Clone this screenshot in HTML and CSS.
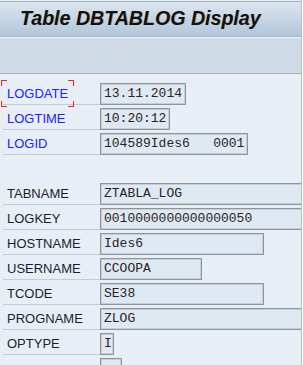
FILE: index.html
```html
<!DOCTYPE html>
<html lang="en">
<head>
    <meta charset="UTF-8">
    <title>Table DBTABLOG Display</title>
    <link rel="stylesheet" href="styles.css">
</head>
<body>

<div class="window">
    <div class="titlebar">
        <h1>Table DBTABLOG Display</h1>
    </div>
    <div class="toolbar"></div>

    <div class="content">
        <div class="group key">
            <div class="row">
                <span class="label focus">LOGDATE</span>
                <span class="field" style="width: calc(10ch + 8px)">13.11.2014</span>
            </div>
            <div class="row">
                <span class="label">LOGTIME</span>
                <span class="field" style="width: calc(8ch + 8px)">10:20:12</span>
            </div>
            <div class="row">
                <span class="label">LOGID</span>
                <span class="field" style="width: calc(18ch + 8px)">104589Ides6   0001</span>
            </div>
        </div>

        <div class="group">
            <div class="row">
                <span class="label">TABNAME</span>
                <span class="field" style="width: calc(30ch + 8px)">ZTABLA_LOG</span>
            </div>
            <div class="row">
                <span class="label">LOGKEY</span>
                <span class="field" style="width: calc(30ch + 8px)">0010000000000000050</span>
            </div>
            <div class="row">
                <span class="label">HOSTNAME</span>
                <span class="field" style="width: calc(20ch + 8px)">Ides6</span>
            </div>
            <div class="row">
                <span class="label">USERNAME</span>
                <span class="field" style="width: calc(12ch + 8px)">CCOOPA</span>
            </div>
            <div class="row">
                <span class="label">TCODE</span>
                <span class="field" style="width: calc(20ch + 8px)">SE38</span>
            </div>
            <div class="row">
                <span class="label">PROGNAME</span>
                <span class="field" style="width: calc(30ch + 8px)">ZLOG</span>
            </div>
            <div class="row">
                <span class="label">OPTYPE</span>
                <span class="field" style="width: calc(1ch + 6px)">I</span>
            </div>
            <div class="row">
                <span class="label"></span>
                <span class="field" style="width: calc(2ch + 6px)"></span>
            </div>
        </div>
    </div>
</div>

</body>
</html>
```

FILE: styles.css
```css
body {
    margin: 0;
    padding: 0;
    background: #ffffff;
    font-family: "Liberation Sans", Arial, sans-serif;
}
.window {
    width: 301px;
    height: 365px;
    overflow: hidden;
    background: #e8eef5;
    border-right: 1px solid #b4c0cc;
}
.titlebar {
    margin-top: 1px;
    height: 34px;
    border-top: 1px solid #a9b3bd;
    border-bottom: 1px solid #9fb3c8;
    background: linear-gradient(#dbe5ef, #b2c6db);
}
.titlebar h1 {
    margin: 0;
    padding-left: 20px;
    font-size: 19.6px;
    font-style: italic;
    font-weight: bold;
    line-height: 33px;
    color: #111111;
    text-shadow: 1px 0 0 rgba(190, 120, 40, 0.35);
    white-space: nowrap;
}
.toolbar {
    height: 35px;
    border-top: 1px solid #f2f6fa;
    border-bottom: 1px solid #a7b1bb;
    background: #cfdbe7;
}
.content {
    padding-top: 8px;
}
.group {
    margin-bottom: 25px;
}
.row {
    display: flex;
    height: 25px;
}
.label {
    position: relative;
    flex-shrink: 0;
    box-sizing: border-box;
    width: 97px;
    height: 23px;
    margin-left: 3px;
    padding-left: 4px;
    border-bottom: 1px solid #c3cbd3;
    font-size: 13px;
    line-height: 23px;
    color: #1c1c30;
}
.key .label {
    color: #2323f0;
}
/* red corner marks round the focused label */
.focus::after {
    content: "";
    position: absolute;
    left: -2px;
    top: -2px;
    width: 73px;
    height: 27px;
    background:
        linear-gradient(#e0282a, #e0282a) left top / 6px 1px no-repeat,
        linear-gradient(#e0282a, #e0282a) left top / 1px 6px no-repeat,
        linear-gradient(#e0282a, #e0282a) right top / 6px 1px no-repeat,
        linear-gradient(#e0282a, #e0282a) right top / 1px 6px no-repeat,
        linear-gradient(#e0282a, #e0282a) left bottom / 6px 1px no-repeat,
        linear-gradient(#e0282a, #e0282a) left bottom / 1px 6px no-repeat,
        linear-gradient(#e0282a, #e0282a) right bottom / 6px 1px no-repeat,
        linear-gradient(#e0282a, #e0282a) right bottom / 1px 6px no-repeat;
}
.field {
    flex-shrink: 0;
    box-sizing: border-box;
    height: 22px;
    margin-top: 1px;
    padding-left: 3px;
    border: 1px solid #8f959b;
    box-shadow: inset 0 0 0 1px #c6cdd4;
    background: #dfe9f4;
    font-family: "Liberation Mono", "Courier New", monospace;
    font-size: 13px;
    line-height: 20px;
    color: #2b2320;
    white-space: pre;
}
```
